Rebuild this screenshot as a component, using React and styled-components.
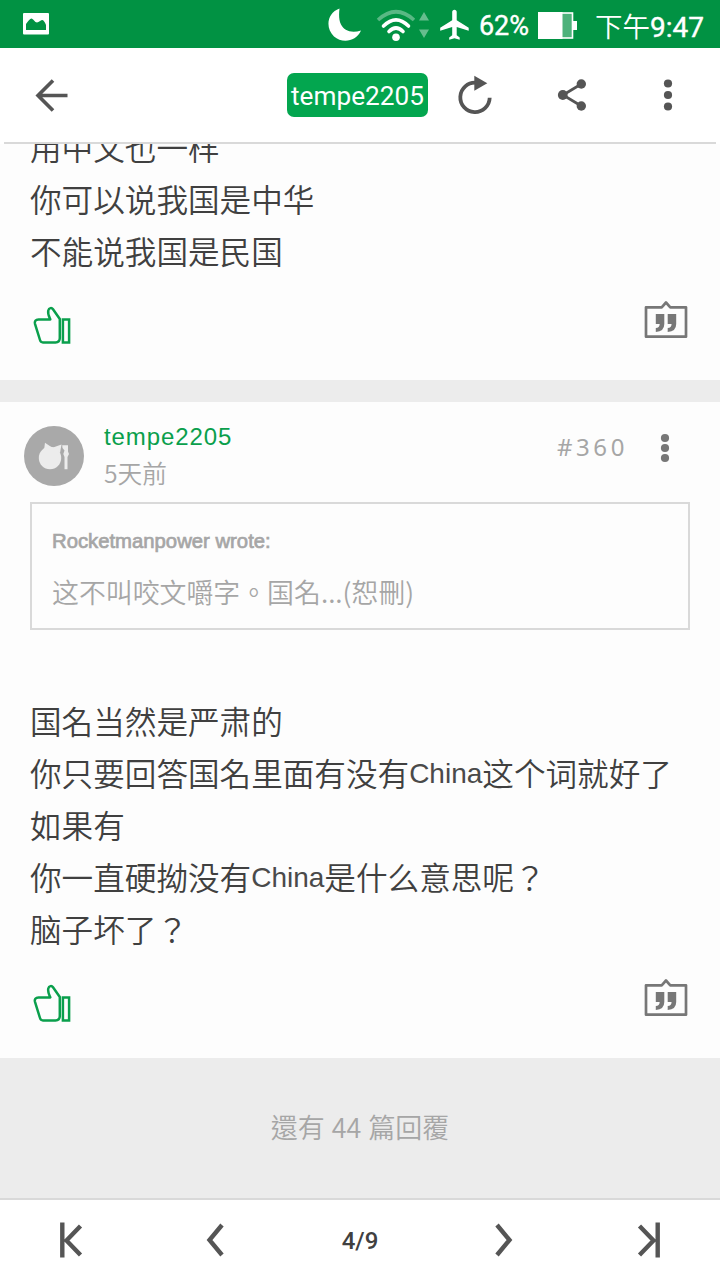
import React from 'react';
import styled, { createGlobalStyle } from 'styled-components';

const cjk = '"Noto Sans CJK TC", "Noto Sans CJK SC", sans-serif';

const GlobalStyle = createGlobalStyle`
  * {
    box-sizing: border-box;
  }
  body {
    margin: 0;
    background: #fdfdfd;
    font-family: ${cjk};
  }
  svg {
    display: block;
    flex: none;
  }
`;

const Screen = styled.div`
  display: flex;
  flex-direction: column;
  width: 720px;
  height: 1280px;
  overflow: hidden;
`;

const StatusBar = styled.div`
  display: flex;
  align-items: center;
  height: 48px;
  padding: 0 16px 0 23px;
  background: #019243;
  color: white;
`;

const StatusText = styled.span`
  margin-left: ${props => props.$left}px;
  font: 400 ${props => props.$size}px/48px Roboto, ${cjk};
  -webkit-text-stroke: 0.4px white;
  white-space: nowrap;
  padding-top: 4px;
`;

const Thin = styled.span`
  font-family: ${cjk};
  font-weight: 350;
  font-size: 27.5px;
  -webkit-text-stroke: 0;
`;

const Spacer = styled.div`
  flex: 1;
`;

const Toolbar = styled.div`
  display: flex;
  align-items: center;
  height: 96px;
  margin: 0 4px;
  padding: 0 37px 0 27px;
  border-bottom: 2px solid #d9d9d9;
  background: white;
`;

const ToolbarWrap = styled.div`
  background: white;
`;

const AuthorPill = styled.div`
  width: 141px;
  height: 44px;
  margin-right: 27px;
  border-radius: 7px;
  background: #03a64f;
  color: white;
  font: 400 26.2px/47px Roboto, sans-serif;
  text-align: center;
`;

const IconButton = styled.button`
  display: flex;
  align-items: center;
  justify-content: center;
  width: ${props => props.$w || 40}px;
  height: 40px;
  margin: 0 ${props => props.$right || 0}px 0 0;
  padding: 0;
  border: none;
  background: transparent;
`;

const Thread = styled.div`
  display: flex;
  flex-direction: column;
  gap: 22px;
  height: 914px;
  background: #ececec;
`;

const Post = styled.div`
  display: flex;
  flex-direction: column;
  justify-content: flex-end;
  height: ${props => props.$height}px;
  background: #fdfdfd;
  overflow: hidden;
`;

const PostHeader = styled.div`
  display: flex;
  height: 100px;
  padding: 17px 32px 0 24px;
`;

const Names = styled.div`
  flex: 1;
  padding-left: 20px;
`;

const UserName = styled.div`
  color: #0a9f4c;
  font: 400 24px/36px "Liberation Sans", sans-serif;
  letter-spacing: 0.9px;
`;

const Time = styled.div`
  color: #a6a6a6;
  font-size: 24.7px;
  font-weight: 350;
  line-height: 34px;
`;

const AvatarBox = styled.div`
  padding-top: 7px;
`;

const Floor = styled.div`
  color: #a6a6a6;
  font: 400 24px/56px "Noto Sans", sans-serif;
  letter-spacing: 3.6px;
  margin-right: 14px;
`;

const MenuBox = styled.div`
  padding-top: 9px;
`;

const Quote = styled.div`
  height: 128px;
  margin: 0 30px 64px;
  padding: 22px 20px 0;
  border: 2px solid #d9d9d9;
  color: #a6a6a6;
`;

const QuoteAuthor = styled.div`
  font: 400 20.3px/30px "Liberation Sans", sans-serif;
  -webkit-text-stroke: 0.7px #a6a6a6;
`;

const QuoteText = styled.div`
  margin-top: 16px;
  font-size: 26.9px;
  font-weight: 350;
  line-height: 40px;
`;

const Line = styled.div`
  flex: none;
  height: 52px;
  padding-left: 30px;
  color: #404040;
  font-size: 31.6px;
  font-weight: 350;
  line-height: 52px;
  white-space: nowrap;
`;

const Latin = styled.span`
  color: #4a4a4a;
  font: 400 28px/1 "Liberation Sans", sans-serif;
  vertical-align: 3px;
`;

const Actions = styled.div`
  display: flex;
  justify-content: space-between;
  flex: none;
  height: 104px;
  padding: 24px 32px 0;
`;

const LikeBox = styled.div`
  padding-top: 5px;
`;

const More = styled.div`
  height: 140px;
  background: #ececec;
  color: #a6a6a6;
  font-size: 27px;
  font-weight: 350;
  line-height: 138px;
  text-align: center;
  word-spacing: 1px;
`;

const Pager = styled.div`
  display: flex;
  align-items: center;
  justify-content: space-between;
  height: 82px;
  padding: 0 51px;
  border-top: 2px solid #d9d9d9;
  background: white;
`;

const PageNumber = styled.div`
  width: 60px;
  color: #404040;
  font: 500 24px/80px Roboto, sans-serif;
  text-align: center;
  padding-top: 2px;
`;

const PictureIcon = () => (
  <svg width="26" height="22" viewBox="0 0 26 22">
    <rect width="26" height="21.5" rx="1" fill="white" />
    <path d="M3 17V11C5 8 7 5.5 8.5 5.5S12 9.5 14 9.5 17.500 7 19 7 22 9 23 12V17Z" fill="#019243" />
  </svg>
);

const StatusIcons = () => (
  <svg width="144" height="48" viewBox="326 0 144 48" fill="white">
    <path d="M338.500 8.500C326 13 324 28 333 36.500 341 43.500 355 42 360 30.500 350 33.500 343 30.500 340 24.500 337.500 19 338 13 338.500 8.500Z" />
    <g fill="none" stroke="white" strokeWidth="3.6">
      <path d="M377 20Q395 3.500 413 20" opacity=".35" />
      <path d="M382.500 26Q395 13.500 407.500 26" strokeLinecap="round" />
      <path d="M388 31.500Q395 24.500 402 31.500" strokeLinecap="round" />
    </g>
    <circle cx="395" cy="37.2" r="3.8" />
    <path d="M418 20.500 423 12l5 8.500ZM418 29.500l5 8.500 5-8.500Z" opacity=".4" />
    <path
      transform="translate(436.200 6.800) scale(1.500)"
      d="M21 16v-2l-8-5V3.500c0-.83-.67-1.500-1.500-1.500S10 2.670 10 3.500V9l-8 5v2l8-2.500V19l-2 1.500V22l3.500-1 3.500 1v-1.500L13 19v-5.500l8 2.500z"
    />
  </svg>
);

const BatteryBox = styled.div`
  margin: 3px 0 0 9px;
`;

const BatteryIcon = () => (
  <svg width="39" height="28" viewBox="0 0 39 28">
    <rect x="1" y="1" width="33.500" height="25" fill="#4db27b" stroke="white" strokeWidth="1.600" />
    <path d="M0 0H24.500V27H0ZM35 9h4v9h-4Z" fill="white" />
  </svg>
);

const BackIcon = () => (
  <svg width="34" height="34" viewBox="0 0 34 34" fill="none" stroke="#555" strokeWidth="3.600">
    <path d="M33.500 17.500H4M19 2.500 4 17.500 19 32.500" />
  </svg>
);

const ReloadIcon = () => (
  <svg width="40" height="40" viewBox="455 75 40 40">
    <path d="M476 82.700A14.700 14.700 0 1 0 489.700 97.800" fill="none" stroke="#555" strokeWidth="3.800" />
    <path d="M474.300 75.800 487.300 83.300 474.300 90.800Z" fill="#555" />
  </svg>
);

const ShareIcon = () => (
  <svg width="32" height="34" viewBox="556 78 32 34" fill="#555">
    <path d="M581.300 84 563 95l18.300 11" fill="none" stroke="#555" strokeWidth="2.700" />
    <circle cx="562.800" cy="95" r="4.900" />
    <circle cx="581.300" cy="84" r="4.700" />
    <circle cx="581.300" cy="106" r="4.700" />
  </svg>
);

const Dots = ({ color, step }) => (
  <svg width="10" height="40" viewBox="0 0 10 40" fill={color}>
    <circle cx="5" cy={20 - step} r="4.100" />
    <circle cx="5" cy="20" r="4.100" />
    <circle cx="5" cy={20 + step} r="4.100" />
  </svg>
);

const Avatar = () => (
  <svg width="60" height="60" viewBox="24 426 60 60" fill="#ececec">
    <circle cx="54" cy="456" r="30" fill="#a9a9a9" />
    <circle cx="50" cy="458" r="11.200" />
    <path d="M45 442.700 52 447.500 44 450Z" />
    <path d="M61.500 444.500 60 453 53 447.500Z" />
    <path d="M62.200 445.200H68V451.500L69 454 67.500 457V469.300H64.500V457L63.300 454 64.500 450.500 62.500 448Z" />
  </svg>
);

const LikeIcon = () => (
  <svg width="40" height="40" viewBox="32 305 40 40" fill="none" stroke="#0a9f4c" strokeWidth="2.500">
    <path
      strokeLinejoin="round"
      d="M50.300 319.400H38.500C35.500 319.400 34.300 321.300 35 323.800L40 340Q40.700 342.400 43 342.400H55.500Q59.800 342.400 59.800 338V319L53 309.200C51.800 307.500 49 307.600 48.300 310.500 47.500 314 49 316.500 50.300 319.400Z"
    />
    <path d="M62.900 319.400H69.100V342.400H62.900Z" />
  </svg>
);

const QuoteIcon = () => (
  <svg width="44" height="40" viewBox="644 300 44 40">
    <path
      d="M646 307.300H661.700L666 302.500 670.300 307.300H686V336.700H646Z"
      fill="none"
      stroke="#777"
      strokeWidth="2.700"
      strokeLinejoin="round"
    />
    <path
      d="M655.800 314H664.300V324Q664.300 331.500 655.800 332V328Q659.500 327.800 659.700 324H655.800ZM667.700 314H676.200V324Q676.200 331.500 667.700 332V328Q671.400 327.800 671.600 324H667.700Z"
      fill="#777"
    />
  </svg>
);

const PagerIcon = ({ d }) => (
  <svg width="40" height="40" viewBox="0 0 40 40" fill="none" stroke="#555" strokeWidth="4.400">
    <path d={d} />
  </svg>
);

const PostActions = () => (
  <Actions>
    <LikeBox>
      <LikeIcon />
    </LikeBox>
    <QuoteIcon />
  </Actions>
);

const App = () => (
  <Screen>
    <GlobalStyle />
    <StatusBar>
      <PictureIcon />
      <Spacer />
      <StatusIcons />
      <StatusText $size={27} $left={8}>62%</StatusText>
      <BatteryBox>
        <BatteryIcon />
      </BatteryBox>
      <StatusText $size={28} $left={18}><Thin>下午</Thin>9:47</StatusText>
    </StatusBar>
    <ToolbarWrap>
      <Toolbar>
        <IconButton><BackIcon /></IconButton>
        <Spacer />
        <AuthorPill>tempe2205</AuthorPill>
        <IconButton $right={57}><ReloadIcon /></IconButton>
        <IconButton $right={65}><ShareIcon /></IconButton>
        <IconButton $w={22}><Dots color="#555" step={11.5} /></IconButton>
      </Toolbar>
    </ToolbarWrap>
    <Thread>
      <Post $height={236}>
        <Line>用中文也一样</Line>
        <Line>你可以说我国是中华</Line>
        <Line>不能说我国是民国</Line>
        <PostActions />
      </Post>
      <Post $height={656}>
        <PostHeader>
          <AvatarBox>
            <Avatar />
          </AvatarBox>
          <Names>
            <UserName>tempe2205</UserName>
            <Time>5天前</Time>
          </Names>
          <Floor>#360</Floor>
          <MenuBox>
            <IconButton $w={46}><Dots color="#777" step={10} /></IconButton>
          </MenuBox>
        </PostHeader>
        <Quote>
          <QuoteAuthor>Rocketmanpower wrote:</QuoteAuthor>
          <QuoteText>这不叫咬文嚼字。国名...(恕刪)</QuoteText>
        </Quote>
        <Line>国名当然是严肃的</Line>
        <Line>你只要回答国名里面有没有<Latin>China</Latin>这个词就好了</Line>
        <Line>如果有</Line>
        <Line>你一直硬拗没有<Latin>China</Latin>是什么意思呢？</Line>
        <Line>脑子坏了？</Line>
        <PostActions />
      </Post>
    </Thread>
    <More>還有 44 篇回覆</More>
    <Pager>
      <PagerIcon d="M11.300 2.500V37.500M29.500 6 15.500 20.500 29.500 35" />
      <PagerIcon d="M31 5 18.500 20 31 35" />
      <PageNumber>4/9</PageNumber>
      <PagerIcon d="M7 5 19.500 20 7 35" />
      <PagerIcon d="M28.700 2.500V37.500M10.500 6 24.500 20.500 10.500 35" />
    </Pager>
  </Screen>
);

export default App;
